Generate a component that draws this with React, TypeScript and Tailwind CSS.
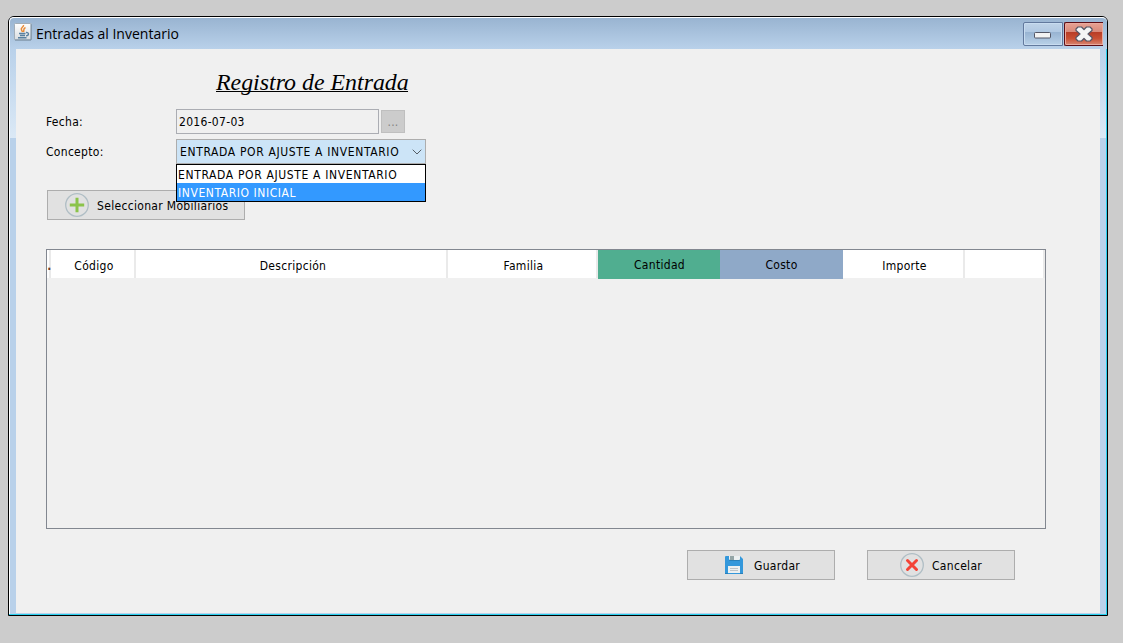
import type { ReactNode } from "react";

const uiFont = "font-['DejaVu_Sans_Condensed','DejaVu_Sans',sans-serif] [font-stretch:condensed]";

function JavaIcon() {
  return (
    <svg width="18" height="18" viewBox="0 0 18 18" className="shrink-0">
      <defs>
        <linearGradient id="java" x1="0" y1="0" x2="0" y2="1">
          <stop offset="0" stopColor="#ffffff" />
          <stop offset="1" stopColor="#d8dcdf" />
        </linearGradient>
      </defs>
      <rect x=".5" y=".5" width="17" height="16.5" rx="1" fill="url(#java)" stroke="#a3aeb8" />
      <path d="M1 17h16M17 1v16" stroke="#718ba3" />
      <path d="M9.500 2C10 4 6 5 7.500 7L8.500 9M11.500 4.500C8.500 6 10.500 7 9.500 9" fill="none" stroke="#e98a35" strokeWidth="1.500" />
      <path d="M5 10.500h6.500M6 12.500h5M4 14.800h8.500M12 9.500c3-.5 3.500 3 0 3.400" fill="none" stroke="#58809f" strokeWidth="1.400" />
    </svg>
  );
}

function PlusIcon() {
  return (
    <svg width="24" height="24" viewBox="0 0 24 24" className="shrink-0">
      <circle cx="12" cy="12" r="11.300" fill="none" stroke="#b0bec5" strokeWidth="1.300" />
      <path d="M12 4.800v14.400M4.800 12h14.400" stroke="#8bc34a" strokeWidth="3" />
    </svg>
  );
}

function CancelIcon() {
  return (
    <svg width="24" height="24" viewBox="0 0 24 24" className="shrink-0">
      <circle cx="12" cy="12" r="11.300" fill="none" stroke="#b0bec5" strokeWidth="1.300" />
      <path d="m7.500 7.500 9 9m0-9-9 9" stroke="#f44336" strokeWidth="3" strokeLinecap="round" />
    </svg>
  );
}

function SaveIcon() {
  return (
    <svg width="18" height="18" viewBox="0 0 18 18" className="shrink-0">
      <path d="M1 0h14l3 3v14a1 1 0 0 1-1 1H1a1 1 0 0 1-1-1V1a1 1 0 0 1 1-1z" fill="#3498db" />
      <path d="M4 0h11v4a1 1 0 0 1-1 1H5a1 1 0 0 1-1-1z" fill="#2980b9" />
      <path d="M4 0h11v3a1 1 0 0 1-1 1H5a1 1 0 0 1-1-1z" fill="#ecf0f1" />
      <path d="M5 0h4v4H5z" fill="#95a5a6" />
      <path d="M3 10h12v7H3z" fill="#ecf0f1" />
      <path d="M0 17.500h3m12 0h3" stroke="#2980b9" />
      <path d="M5 12.500h8M5 14.500h8" stroke="#bdc3c7" />
    </svg>
  );
}

function ActionButton({ children, className }: { children: ReactNode; className: string }) {
  return (
    <button className={`flex h-[30px] items-center border border-[#adadad] bg-[#e1e1e1] ${className}`}>
      {children}
    </button>
  );
}

const columns = [
  { label: ".", cls: "w-1 h-7 bg-white border-r-2 border-[#eaeaea]", text: "pt-[3px] pl-[3px] font-bold text-[#6b3a1e]" },
  { label: "Código", cls: "w-[85px] h-7 bg-white border-r-2 border-[#eaeaea]", text: "pt-[3px] pl-[3px]" },
  { label: "Descripción", cls: "w-[312px] h-7 bg-white border-r-2 border-[#eaeaea]", text: "pt-[3px] pl-1" },
  { label: "Familia", cls: "w-[150px] h-7 bg-white border-r-2 border-[#eaeaea]", text: "pt-[3px] pl-[3px]" },
  { label: "Cantidad", cls: "w-[122px] h-[29px] bg-[#50ae90]", text: "pl-px" },
  { label: "Costo", cls: "w-[123px] h-[29px] bg-[#8fa9c8]", text: "" },
  { label: "Importe", cls: "w-[122px] h-7 bg-white border-r-2 border-[#eaeaea]", text: "pt-[3px] pl-[3px]" },
  { label: "", cls: "w-20 h-7 bg-white border-r-2 border-[#eaeaea]", text: "" },
];

export default function App() {
  return (
    <div className={`h-[643px] w-[1123px] overflow-hidden bg-[#cccccc] pl-2 pt-4 text-xs leading-4 tracking-[0.3px] text-black ${uiFont}`}>
      <div className="flex h-[600px] w-[1100px] flex-col rounded-t-[6px] border border-black bg-[#b9d1ea]">
        <header className="flex h-8 shrink-0 rounded-t-[5px] border-l border-t border-white bg-linear-to-b from-[#99b4d1] to-[#b9d1ea] pl-1">
          <div className="flex pt-[5px]">
            <JavaIcon />
            <h1 className="pl-1 pt-[2px] font-['Open_Sans','Noto_Sans',sans-serif] text-sm leading-[18px] tracking-[0px] [font-stretch:normal]">Entradas al Inventario</h1>
          </div>
          <div className="ml-auto flex gap-px pr-1 pt-1">
            <button aria-label="Minimizar" className="flex h-6 w-10 items-center justify-center rounded-l-[2px] border border-[#62799d] bg-[linear-gradient(#bfd3e8_0%,#b0c8e2_42%,#98b4d2_43%,#b9d1e8_100%)] shadow-[inset_0_0_0_1px_#c8dcf0]">
              <svg width="17" height="7" viewBox="0 0 17 7" className="mr-px mt-[3px]"><rect x=".5" y=".5" width="16" height="5.500" rx="1" fill="#f3f3f3" stroke="#535666" /></svg>
            </button>
            <button aria-label="Cerrar" className="flex h-6 w-[39px] items-center justify-center rounded-l-[2px] border border-r-0 border-[#5c0d15] bg-[linear-gradient(#e7a294_0%,#d88878_42%,#b83d27_43%,#c94f33_70%,#d78672_100%)] shadow-[inset_0_0_0_1px_#e9a99d]">
              <svg width="18" height="16" viewBox="0 0 18 16" className="mb-px mr-px">
                <path d="M3 1h3.500L9 3.500 11.500 1H15l2 2v1.500L13 8l4 3.500V13l-2 2h-3.500L9 12.500 6.500 15H3l-2-2v-1.500L5 8 1 4.500V3z" fill="#f5f5f5" stroke="#535666" strokeWidth="1.200" strokeLinejoin="round" />
              </svg>
            </button>
          </div>
        </header>

        <div className="flex h-[566px] border-b border-[#28d0ee]">
          <div className="w-[7px] shrink-0 border-l border-white">
            <div className="h-[89px] bg-linear-to-b from-[#b9d1ea] to-[#dbe9f6]" />
          </div>
          <main className="flex h-[564px] w-[1084px] flex-col bg-[#f0f0f0] pl-[30px]">
            <h2 className="ml-[170px] mt-5 flex h-10 w-[192px]">
              <span className="h-[23px] w-[185px] origin-left scale-x-[1.038] whitespace-nowrap border-b border-black font-['Liberation_Serif',serif] text-[23px] italic leading-[28px] tracking-normal [font-stretch:normal]">Registro de Entrada</span>
            </h2>
            <div className="flex h-[25px]">
              <label className="w-[130px] pt-[5px]">Fecha:</label>
              <div className="w-[203px] border border-[#abadb3] pl-[2px] pt-1">2016-07-03</div>
              <button className="ml-[2px] mt-px h-[23px] w-6 border border-[#bfbfbf] bg-[#cccccc] pt-px text-[#838383]">...</button>
            </div>
            <div className="mt-[5px] flex h-[25px]">
              <label className="w-[130px] pt-[5px]">Concepto:</label>
              <div className="relative flex w-[250px] border border-[#adadad] bg-[#cce4f7] pl-[3px] pt-1">
                <span className="whitespace-nowrap tracking-[0.64px]">ENTRADA POR AJUSTE A INVENTARIO</span>
                <svg width="10" height="6" viewBox="0 0 10 6" className="ml-auto mr-[3px] mt-[5px] shrink-0"><path d="m.7.7 4.300 4.300L9.300.7" fill="none" stroke="#555e66" /></svg>
                <ul className="absolute -left-px top-6 z-10 h-[38px] w-[250px] border border-black bg-white">
                  <li className="h-[18px] whitespace-nowrap pl-px pt-[2px] tracking-[0.64px]">ENTRADA POR AJUSTE A INVENTARIO</li>
                  <li className="h-[18px] whitespace-nowrap bg-[#3399ff] pl-px pt-[2px] tracking-[0.58px] text-white">INVENTARIO INICIAL</li>
                </ul>
              </div>
            </div>
            <ActionButton className="ml-px mt-[26px] w-[198px] pl-[17px]">
              <PlusIcon /><span className="whitespace-nowrap pl-2 pt-[2px] tracking-[0.32px]">Seleccionar Mobiliarios</span>
            </ActionButton>
            <div className="mt-[29px] h-[280px] w-[1000px] border border-[#828790]">
              <div className="flex">
                {columns.map((c, i) => (
                  <div key={i} className={`flex shrink-0 items-center justify-center ${c.cls}`}>
                    <span className={c.text}>{c.label}</span>
                  </div>
                ))}
              </div>
            </div>
            <div className="ml-[641px] mt-[21px] flex gap-8">
              <ActionButton className="w-[148px] pl-[37px]"><SaveIcon /><span className="pl-[11px] pt-[2px]">Guardar</span></ActionButton>
              <ActionButton className="w-[148px] pl-8"><CancelIcon /><span className="pl-2 pt-[2px]">Cancelar</span></ActionButton>
            </div>
          </main>
          <div className="w-[7px] shrink-0 border-r border-[#28d0ee]">
            <div className="h-[89px] bg-linear-to-b from-[#b9d1ea] to-[#dbe9f6]" />
          </div>
        </div>
      </div>
    </div>
  );
}
